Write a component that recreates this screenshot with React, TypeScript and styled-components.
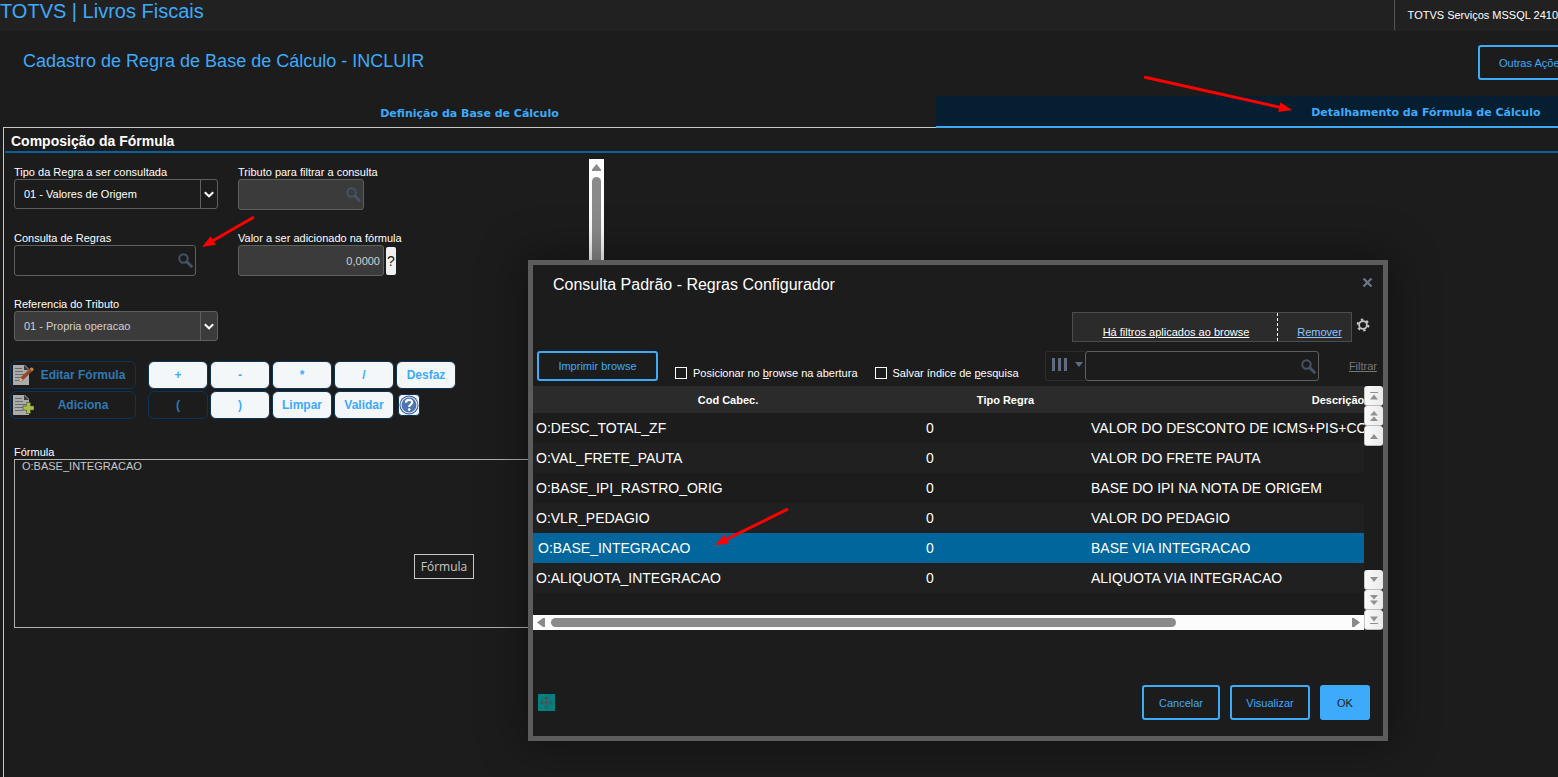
import React from "react";
import styled, { createGlobalStyle } from "styled-components";

const GlobalStyle = createGlobalStyle`
  * { box-sizing: border-box; }
  html, body { margin: 0; background: #1c1c1c; }
  body, button, input, select, textarea {
    font-family: "Liberation Sans", Arial, sans-serif;
    font-size: 11px;
    color: #fff;
  }
`;

const blue = "#3daafa";

const Page = styled.div`
  position: relative;
  display: flex;
  flex-direction: column;
  min-height: 100vh;
  overflow: hidden;
  background: #1c1c1c;
`;

const TopBar = styled.header`
  display: flex;
  justify-content: space-between;
  height: 31px;
  background: #212121;
`;

const AppTitle = styled.div`
  font-size: 20px;
  line-height: 22px;
  color: ${blue};
`;

const Environment = styled.div`
  padding-left: 13px;
  border-left: 1px solid #555;
  border-bottom-left-radius: 2px;
  line-height: 30px;
  white-space: nowrap;
`;

const Workspace = styled.main`
  display: flex;
  flex-direction: column;
  flex: 1;
  margin-left: 3px;
`;

const TitleRow = styled.div`
  display: flex;
  justify-content: space-between;
  padding: 14px 0 0 20px;
  height: 65px;
`;

const PageTitle = styled.h1`
  margin: 0;
  font-size: 18px;
  line-height: 32px;
  font-weight: 400;
  color: ${blue};
`;

const OutlineButton = styled.button<{ $width: number; $height?: number; $solid?: boolean }>`
  flex: none;
  width: ${(p) => p.$width}px;
  height: ${(p) => p.$height ?? 35}px;
  padding: 0;
  border: 2px solid ${blue};
  border-radius: 3px;
  background: ${(p) => (p.$solid ? blue : "transparent")};
  color: ${(p) => (p.$solid ? "#1c1c1c" : blue)};
`;

const ActionsButton = styled(OutlineButton)`
  margin-right: -28px;
`;

const Tabs = styled.nav`
  display: flex;
  height: 32px;
`;

const Tab = styled.button<{ $active?: boolean }>`
  flex: none;
  width: ${(p) => (p.$active ? "63%" : "60%")};
  padding: ${(p) => (p.$active ? "2px 0 0" : "3px 0 0")};
  border: 0;
  border-bottom: ${(p) => (p.$active ? `2px solid ${blue}` : "1px solid #c8c8c8")};
  border-radius: ${(p) => (p.$active ? "3px 0 0 0" : "0")};
  background: ${(p) => (p.$active ? "#051e30" : "transparent")};
  color: ${blue};
  font-family: "DejaVu Sans", Verdana, sans-serif;
  font-weight: 700;
`;

const Panel = styled.section`
  flex: 1;
  border-left: 1px solid #c8c8c8;
`;

const PanelTitle = styled.h2`
  margin: 0 0 0 1px;
  padding: 3px 0 0 6px;
  height: 25px;
  border-bottom: 2px solid #00619c;
  font-size: 14px;
  line-height: 20px;
`;

const PanelBody = styled.div`
  display: flex;
`;

const Form = styled.form`
  width: 585px;
  padding: 12px 24px 0 10px;
`;

const Fields = styled.div`
  display: grid;
  grid-template-columns: 204px 204px;
  grid-template-rows: 66px 66px 44px;
  column-gap: 20px;
`;

const Field = styled.div`
  display: flex;
  flex-direction: column;
`;

const Label = styled.label`
  line-height: 14px;
  white-space: nowrap;
`;

const SelectBox = styled.div<{ $dim?: boolean }>`
  display: grid;
  grid-template-columns: 1fr 17px;
  height: 30px;
  border: 1px solid #5f5f5f;
  border-radius: 3px;
  background: ${(p) => (p.$dim ? "#3b3b3b" : "#1c1c1c")};
  color: ${(p) => (p.$dim ? "#d0d0d0" : "#fff")};

  select {
    grid-area: 1 / 1 / 2 / 3;
    padding: 0 0 0 9px;
    border: 0;
    appearance: none;
    background: transparent;
    color: inherit;
  }
`;

const SelectArrow = styled.span`
  grid-area: 1 / 2 / 2 / 3;
  display: flex;
  align-items: center;
  justify-content: center;
  border-left: 1px solid #5f5f5f;
  pointer-events: none;
`;

const SearchBox = styled.div<{ $width: number; $dim?: boolean; $height?: number }>`
  display: flex;
  align-items: center;
  width: ${(p) => p.$width}px;
  height: ${(p) => p.$height ?? 31}px;
  padding-right: 2px;
  border: 1px solid #5f5f5f;
  border-radius: 3px;
  background: ${(p) => (p.$dim ? "#3b3b3b" : "#1c1c1c")};

  input {
    flex: 1;
    min-width: 0;
    height: 100%;
    border: 0;
    background: transparent;
  }
`;

const ValueRow = styled.div`
  display: flex;
  align-items: center;
  gap: 2px;
`;

const ValueInput = styled.input`
  width: 146px;
  height: 31px;
  padding: 0 3px;
  border: 1px solid #5f5f5f;
  border-radius: 3px;
  background: #3b3b3b;
  color: #d0d0d0;
  text-align: right;
`;

const HintButton = styled.button`
  width: 10px;
  height: 28px;
  padding: 0;
  border: 0;
  border-radius: 2px;
  background: #f0f0f0;
  color: #222;
  font-size: 14px;
`;

const Keypad = styled.div`
  display: flex;
  gap: 12px;
  margin: 20px 0 0 -4px;
`;

const KeyGrid = styled.div<{ $columns: string }>`
  display: grid;
  grid-template-columns: ${(p) => p.$columns};
  grid-auto-rows: 28px;
  gap: 2px;
`;

const Key = styled.button<{ $dark?: boolean }>`
  padding: 0;
  border: 1px solid #0c3459;
  border-radius: 6px;
  background: ${(p) => (p.$dark ? "#1c1c1c" : "#f4f7fa")};
  color: ${(p) => (p.$dark ? "#2f7ab3" : blue)};
  font-size: 12px;
  font-weight: 700;
`;

const WideKey = styled(Key)`
  display: flex;
  align-items: center;
  padding-left: 1px;

  span {
    flex: 1;
    padding-right: 3px;
  }
`;

const HelpKey = styled(Key)`
  width: 22px;
  height: 22px;
  align-self: center;
  margin-left: 2px;
  border-radius: 4px;

  svg {
    display: block;
  }
`;

const FormulaField = styled(Field)`
  margin-top: 26px;
`;

const FormulaText = styled.textarea`
  height: 169px;
  padding: 0 7px;
  border: 1px solid #b0b0b0;
  resize: none;
  background: transparent;
  color: #c8c8c8;
  line-height: 13px;
  outline: 0;
`;

const VScroll = styled.div`
  width: 15px;
  height: 440px;
  margin-top: 6px;
  padding: 5px 3px 20px;
  background: #fcfcfc;
  display: flex;
  flex-direction: column;
  align-items: center;
  gap: 6px;
`;

const VThumb = styled.div`
  width: 9px;
  flex: 1;
  border-radius: 5px;
  background: #8a8a8a;
`;

const Dialog = styled.section`
  position: absolute;
  left: 528px;
  top: 260px;
  width: 860px;
  border: 5px solid #5c5c5c;
  background: #1c1c1c;
  box-shadow: 0 0 40px 6px rgba(0, 0, 0, 0.35);
`;

const DialogHead = styled.div`
  display: flex;
  justify-content: space-between;
  height: 47px;
  padding: 8px 10px 0 20px;
`;

const DialogTitle = styled.h2`
  margin: 0;
  font-size: 16px;
  line-height: 24px;
  font-weight: 400;
`;

const IconButton = styled.button<{ $height: number }>`
  display: flex;
  align-items: center;
  justify-content: center;
  height: ${(p) => p.$height}px;
  padding: 0;
  border: 0;
  background: transparent;
`;

const FilterRow = styled.div`
  display: flex;
  justify-content: flex-end;
  gap: 4px;
  height: 39px;
  padding-right: 13px;
`;

const FilterBox = styled.div`
  display: grid;
  grid-template-columns: 204px 74px;
  height: 30px;
  border: 1px solid #4c4c4c;
  background: #2b2b2b;
`;

const FilterLink = styled.a<{ $tone: string }>`
  padding: 11px 0 0 2px;
  line-height: 16px;
  text-align: center;
  color: ${(p) => p.$tone};

  &:last-child {
    padding-left: 10px;
    border-left: 1px dashed #fff;
  }
`;

const Toolbar = styled.div`
  display: flex;
  height: 35px;
  padding: 0 6px 0 4px;
`;

const Check = styled.label<{ $gap: number }>`
  display: flex;
  align-items: center;
  gap: 6px;
  height: 16px;
  margin: 14px 0 0 ${(p) => p.$gap}px;
  white-space: nowrap;

  input {
    width: 12px;
    height: 12px;
    margin: 0;
    appearance: none;
    border: 1px solid #fff;
  }
`;

const ColumnsButton = styled.button`
  display: flex;
  align-items: center;
  gap: 8px;
  width: 40px;
  height: 30px;
  margin-left: auto;
  padding: 0 0 3px 6px;
  border: 1px solid #2c2c2c;
  border-right: 0;
  border-radius: 3px 0 0 3px;
  background: transparent;
`;

const FilterAction = styled.a`
  margin-left: 30px;
  line-height: 30px;
  color: #777;
`;

const Browse = styled.div`
  display: flex;
  height: 244px;
`;

const BrowseMain = styled.div`
  flex: 1;
  min-width: 0;
  display: flex;
  flex-direction: column;
  justify-content: space-between;
`;

const TableClip = styled.div`
  overflow: hidden;
`;

const Table = styled.table`
  width: 1055px;
  table-layout: fixed;
  border-collapse: collapse;

  th {
    height: 27px;
    padding: 0;
    background: #2b2b2b;
    font-size: 11px;
    text-align: center;
  }
`;

const CodeCol = styled.col`
  width: 390px;
`;

const TypeCol = styled.col`
  width: 165px;
`;

const Row = styled.tr<{ $selected?: boolean }>`
  background: ${(p) => (p.$selected ? "#00669c" : "#1c1c1c")};

  &:nth-child(even) {
    background: #202020;
  }

  td {
    height: 30px;
    padding: 0 3px;
    font-size: 14px;
    white-space: nowrap;
  }

  td:first-child {
    padding-left: ${(p) => (p.$selected ? 5 : 3)}px;
  }
`;

const HScroll = styled.div`
  display: flex;
  align-items: center;
  height: 15px;
  padding: 0 4px;
  background: #fcfcfc;
`;

const HThumb = styled.div`
  width: 76%;
  height: 9px;
  margin: 0 auto 0 6px;
  border-radius: 5px;
  background: #8a8a8a;
`;

const NavColumn = styled.div`
  display: flex;
  flex-direction: column;
  justify-content: space-between;
  width: 19px;
`;

const NavButton = styled.button`
  display: flex;
  align-items: center;
  justify-content: center;
  width: 19px;
  height: 20px;
  padding: 0;
  border: 0;
  border-left: 1px solid #c4c4c4;
  border-bottom: 1px solid #bbb;
  border-radius: 3px;
  background: linear-gradient(90deg, #fafafa, #e9eaec);
`;

const DialogFoot = styled.div`
  display: flex;
  align-items: center;
  gap: 10px;
  padding: 55px 13px 16px 5px;
`;

const Spacer = styled.span`
  flex: 1;
`;

const Tooltip = styled.div`
  position: absolute;
  left: 414px;
  top: 554px;
  width: 60px;
  height: 25px;
  border: 1px solid #c8c8c8;
  background: #1c1c1c;
  font-family: "Open Sans", sans-serif;
  font-size: 12px;
  line-height: 23px;
  text-align: center;
  color: #c8c8c8;
`;

const ArrowSvg = styled.svg<{ $x: number; $y: number }>`
  position: absolute;
  left: ${(p) => p.$x}px;
  top: ${(p) => p.$y}px;
  pointer-events: none;
`;

function Arrow({ x1, y1, x2, y2 }: { x1: number; y1: number; x2: number; y2: number }) {
  const x = Math.min(x1, x2) - 10;
  const y = Math.min(y1, y2) - 10;
  const len = Math.hypot(x2 - x1, y2 - y1);
  const angle = (Math.atan2(y2 - y1, x2 - x1) * 180) / Math.PI;
  return (
    <ArrowSvg $x={x} $y={y} width={Math.abs(x2 - x1) + 20} height={Math.abs(y2 - y1) + 20} aria-hidden="true">
      <g transform={`translate(${x1 - x} ${y1 - y}) rotate(${angle})`} fill="#f00">
        <rect x="0" y="-1.5" width={len - 10} height="3" rx="1" />
        <path d={`M${len} 0L${len - 13} -5V5Z`} />
      </g>
    </ArrowSvg>
  );
}

const SearchIcon = () => (
  <svg width="15" height="15" viewBox="0 0 15 15" fill="none" stroke="#465266" aria-hidden="true">
    <circle cx="5.500" cy="5.500" r="4.200" strokeWidth="2" />
    <path d="M8.800 8.800L13.300 13.300" strokeWidth="3" strokeLinecap="round" />
  </svg>
);

const Chevron = () => (
  <svg width="10" height="7" viewBox="0 0 10 7" fill="none" stroke="#fff" strokeWidth="2" aria-hidden="true">
    <path d="M.8 1.200L5 5.300L9.200 1.200" />
  </svg>
);

const Doc = () => (
  <>
    <path d="M1 1h12l4 4v16H1z" fill="#ababab" />
    <path d="M12 1l5 5h-5z" fill="#3a3a3a" />
    <path d="M3 4.500h7M3 7.500h8M3 10.500h11M3 13.500h11M3 16.500h8" stroke="#6c6c6c" />
  </>
);

const EditIcon = () => (
  <svg width="22" height="22" viewBox="0 0 22 22" aria-hidden="true">
    <Doc />
    <path d="M7 18l1.500-4.500L17.500 5l2.500 2.500L11 16z" fill="#94452a" />
    <path d="M7 18l1.500-4.500L11 16z" fill="#d9b98a" />
    <path d="M17.500 5l2.500 2.500 1.500-1.500c.5-1.500-1-3-2.500-2.500z" fill="#c78440" />
  </svg>
);

const AddIcon = () => (
  <svg width="22" height="22" viewBox="0 0 22 22" aria-hidden="true">
    <Doc />
    <path d="M14.500 8.500h4V12h3.500v4h-3.500v3.500h-4V16H11v-4h3.500z" fill="#a9bf4d" stroke="#44501d" strokeWidth=".6" />
  </svg>
);

const HelpIcon = () => (
  <svg width="20" height="20" viewBox="0 0 20 20" aria-hidden="true">
    <circle cx="10" cy="10" r="9.500" fill="#2f5596" />
    <circle cx="10" cy="10" r="8" fill="#4c74b2" stroke="#dfe8f4" strokeWidth="1.200" />
    <path d="M6.900 7.600C7 3.800 13.300 4 13.100 7.500C13 9.700 10.200 9.700 10.200 12" fill="none" stroke="#fff" strokeWidth="2.200" />
    <circle cx="10.200" cy="14.600" r="1.300" fill="#fff" />
  </svg>
);

const GearIcon = () => (
  <svg width="14" height="14" viewBox="0 0 14 14" aria-hidden="true">
    <circle cx="7" cy="7" r="3.900" fill="none" stroke="#c4c4c4" strokeWidth="1.800" />
    <circle cx="7" cy="7" r="5.400" fill="none" stroke="#c4c4c4" strokeWidth="2" strokeDasharray="2.400 3.255" />
  </svg>
);

const MoveIcon = () => (
  <svg width="17" height="17" viewBox="0 0 17 17" aria-hidden="true">
    <path d="M0 0h17v17H0z" fill="#008080" />
    <path
      d="M8 4h1v4h4v1H9v4H8V9H4V8h4zM8.500 2l2.500 3H6zM8.500 15l2.500-3H6zM2 8.500l3-2.500v5zM15 8.500l-3-2.500v5z"
      fill="#4a5055"
    />
  </svg>
);

type NavKind = "first" | "pageUp" | "up" | "down" | "pageDown" | "last";

const navPaths: Record<NavKind, string> = {
  first: "M1 2h8v1H1zM5 4.500l4 5H1z",
  pageUp: "M5 1l4 4.500H1zM5 6.500l4 4.500H1z",
  up: "M5 4l4 5H1z",
  down: "M5 8l4-5H1z",
  pageDown: "M5 5.500L9 1H1zM5 11l4-4.500H1z",
  last: "M1 9h8v1H1zM5 7.500l4-5H1z",
};

const NavGroup = ({ kinds }: { kinds: [NavKind, string][] }) => (
  <div>
    {kinds.map(([kind, title]) => (
      <NavButton key={kind} type="button" aria-label={title}>
        <svg width="10" height="12" viewBox="0 0 10 12" fill="#909090">
          <path d={navPaths[kind]} />
        </svg>
      </NavButton>
    ))}
  </div>
);

const rows = [
  ["O:DESC_TOTAL_ZF", "VALOR DO DESCONTO DE ICMS+PIS+COFINS"],
  ["O:VAL_FRETE_PAUTA", "VALOR DO FRETE PAUTA"],
  ["O:BASE_IPI_RASTRO_ORIG", "BASE DO IPI NA NOTA DE ORIGEM"],
  ["O:VLR_PEDAGIO", "VALOR DO PEDAGIO"],
  ["O:BASE_INTEGRACAO", "BASE VIA INTEGRACAO"],
  ["O:ALIQUOTA_INTEGRACAO", "ALIQUOTA VIA INTEGRACAO"],
];

export default function App() {
  return (
    <Page>
      <GlobalStyle />
      <TopBar>
        <AppTitle>TOTVS | Livros Fiscais</AppTitle>
        <Environment>TOTVS Serviços MSSQL 2410</Environment>
      </TopBar>

      <Workspace>
        <TitleRow>
          <PageTitle>Cadastro de Regra de Base de Cálculo - INCLUIR</PageTitle>
          <ActionsButton type="button" $width={108}>Outras Ações</ActionsButton>
        </TitleRow>
        <Tabs>
          <Tab type="button">Definição da Base de Cálculo</Tab>
          <Tab type="button" $active>Detalhamento da Fórmula de Cálculo</Tab>
        </Tabs>

        <Panel>
          <PanelTitle>Composição da Fórmula</PanelTitle>
          <PanelBody>
            <Form onSubmit={(e) => e.preventDefault()}>
              <Fields>
                <Field>
                  <Label htmlFor="tipo">Tipo da Regra a ser consultada</Label>
                  <SelectBox>
                    <select id="tipo">
                      <option>01 - Valores de Origem</option>
                    </select>
                    <SelectArrow><Chevron /></SelectArrow>
                  </SelectBox>
                </Field>
                <Field>
                  <Label htmlFor="tributo">Tributo para filtrar a consulta</Label>
                  <SearchBox $width={126} $dim>
                    <input id="tributo" />
                    <SearchIcon />
                  </SearchBox>
                </Field>
                <Field>
                  <Label htmlFor="consulta">Consulta de Regras</Label>
                  <SearchBox $width={182}>
                    <input id="consulta" />
                    <SearchIcon />
                  </SearchBox>
                </Field>
                <Field>
                  <Label htmlFor="valor">Valor a ser adicionado na fórmula</Label>
                  <ValueRow>
                    <ValueInput id="valor" defaultValue="0,0000" />
                    <HintButton type="button">?</HintButton>
                  </ValueRow>
                </Field>
                <Field>
                  <Label htmlFor="referencia">Referencia do Tributo</Label>
                  <SelectBox $dim>
                    <select id="referencia">
                      <option>01 - Propria operacao</option>
                    </select>
                    <SelectArrow><Chevron /></SelectArrow>
                  </SelectBox>
                </Field>
              </Fields>

              <Keypad>
                <KeyGrid $columns="126px">
                  <WideKey type="button" $dark><EditIcon /><span>Editar Fórmula</span></WideKey>
                  <WideKey type="button" $dark><AddIcon /><span>Adiciona</span></WideKey>
                </KeyGrid>
                <KeyGrid $columns="repeat(5, 60px)">
                  <Key type="button">+</Key>
                  <Key type="button">-</Key>
                  <Key type="button">*</Key>
                  <Key type="button">/</Key>
                  <Key type="button">Desfaz</Key>
                  <Key type="button" $dark>(</Key>
                  <Key type="button">)</Key>
                  <Key type="button">Limpar</Key>
                  <Key type="button">Validar</Key>
                  <HelpKey type="button" aria-label="Ajuda"><HelpIcon /></HelpKey>
                </KeyGrid>
              </Keypad>

              <FormulaField>
                <Label htmlFor="formula">Fórmula</Label>
                <FormulaText id="formula" defaultValue="O:BASE_INTEGRACAO" />
              </FormulaField>
            </Form>
            <VScroll>
              <svg width="9" height="7" viewBox="0 0 9 7" fill="#8a8a8a" aria-hidden="true">
                <path d="M4.500 0L9 5.500V7H0V5.500z" />
              </svg>
              <VThumb />
            </VScroll>
          </PanelBody>
        </Panel>
      </Workspace>

      <Tooltip role="tooltip">Fórmula</Tooltip>

      <Dialog role="dialog" aria-labelledby="dialog-title">
        <DialogHead>
          <DialogTitle id="dialog-title">Consulta Padrão - Regras Configurador</DialogTitle>
          <IconButton type="button" $height={19} aria-label="Fechar">
            <svg width="11" height="11" viewBox="0 0 11 11" stroke="#6d7789" strokeWidth="2.200">
              <path d="M1.500 1.500l8 8M9.500 1.500l-8 8" />
            </svg>
          </IconButton>
        </DialogHead>
        <FilterRow>
          <FilterBox>
            <FilterLink href="#filtros" $tone="#fff">Há filtros aplicados ao browse</FilterLink>
            <FilterLink href="#remover" $tone="#8ec5fb">Remover</FilterLink>
          </FilterBox>
          <IconButton type="button" $height={26} aria-label="Configurar">
            <GearIcon />
          </IconButton>
        </FilterRow>
        <Toolbar>
          <OutlineButton type="button" $width={121} $height={30}>Imprimir browse</OutlineButton>
          <Check $gap={17}>
            <input type="checkbox" />
            <span>Posicionar no <u>b</u>rowse na abertura</span>
          </Check>
          <Check $gap={17}>
            <input type="checkbox" />
            <span>Salvar índice de <u>p</u>esquisa</span>
          </Check>
          <ColumnsButton type="button" aria-label="Colunas">
            <svg width="15" height="13" viewBox="0 0 15 13" fill="#606a80">
              <path d="M0 0h3v13H0zM6 0h3v13H6zM12 0h3v13h-3z" />
            </svg>
            <svg width="8" height="5" viewBox="0 0 8 5" fill="#606a80">
              <path d="M0 0h8L4 5z" />
            </svg>
          </ColumnsButton>
          <SearchBox $width={234} $height={30}>
            <input aria-label="Pesquisar" />
            <SearchIcon />
          </SearchBox>
          <FilterAction href="#filtrar">Filtrar</FilterAction>
        </Toolbar>
        <Browse>
          <BrowseMain>
            <TableClip>
              <Table>
                <colgroup>
                  <CodeCol />
                  <TypeCol />
                  <col />
                </colgroup>
                <thead>
                  <tr>
                    <th>Cod Cabec.</th>
                    <th>Tipo Regra</th>
                    <th>Descrição</th>
                  </tr>
                </thead>
                <tbody>
                  {rows.map(([code, text]) => (
                    <Row key={code} $selected={code === "O:BASE_INTEGRACAO"}>
                      <td>{code}</td>
                      <td>0</td>
                      <td>{text}</td>
                    </Row>
                  ))}
                </tbody>
              </Table>
            </TableClip>
            <HScroll>
              <svg width="8" height="9" viewBox="0 0 8 9" fill="#8a8a8a" aria-hidden="true">
                <path d="M0 4.500L6 0h2v9H6z" />
              </svg>
              <HThumb />
              <svg width="8" height="9" viewBox="0 0 8 9" fill="#8a8a8a" aria-hidden="true">
                <path d="M8 4.500L2 0H0v9h2z" />
              </svg>
            </HScroll>
          </BrowseMain>
          <NavColumn>
            <NavGroup kinds={[["first", "Primeiro"], ["pageUp", "Página anterior"], ["up", "Anterior"]]} />
            <NavGroup kinds={[["down", "Próximo"], ["pageDown", "Próxima página"], ["last", "Último"]]} />
          </NavColumn>
        </Browse>
        <DialogFoot>
          <MoveIcon />
          <Spacer />
          <OutlineButton type="button" $width={78}>Cancelar</OutlineButton>
          <OutlineButton type="button" $width={80}>Visualizar</OutlineButton>
          <OutlineButton type="button" $width={50} $solid>OK</OutlineButton>
        </DialogFoot>
      </Dialog>

      <Arrow x1={1144} y1={77} x2={1292} y2={110} />
      <Arrow x1={254} y1={217} x2={202} y2={247} />
      <Arrow x1={788} y1={509} x2={715} y2={545} />
    </Page>
  );
}
